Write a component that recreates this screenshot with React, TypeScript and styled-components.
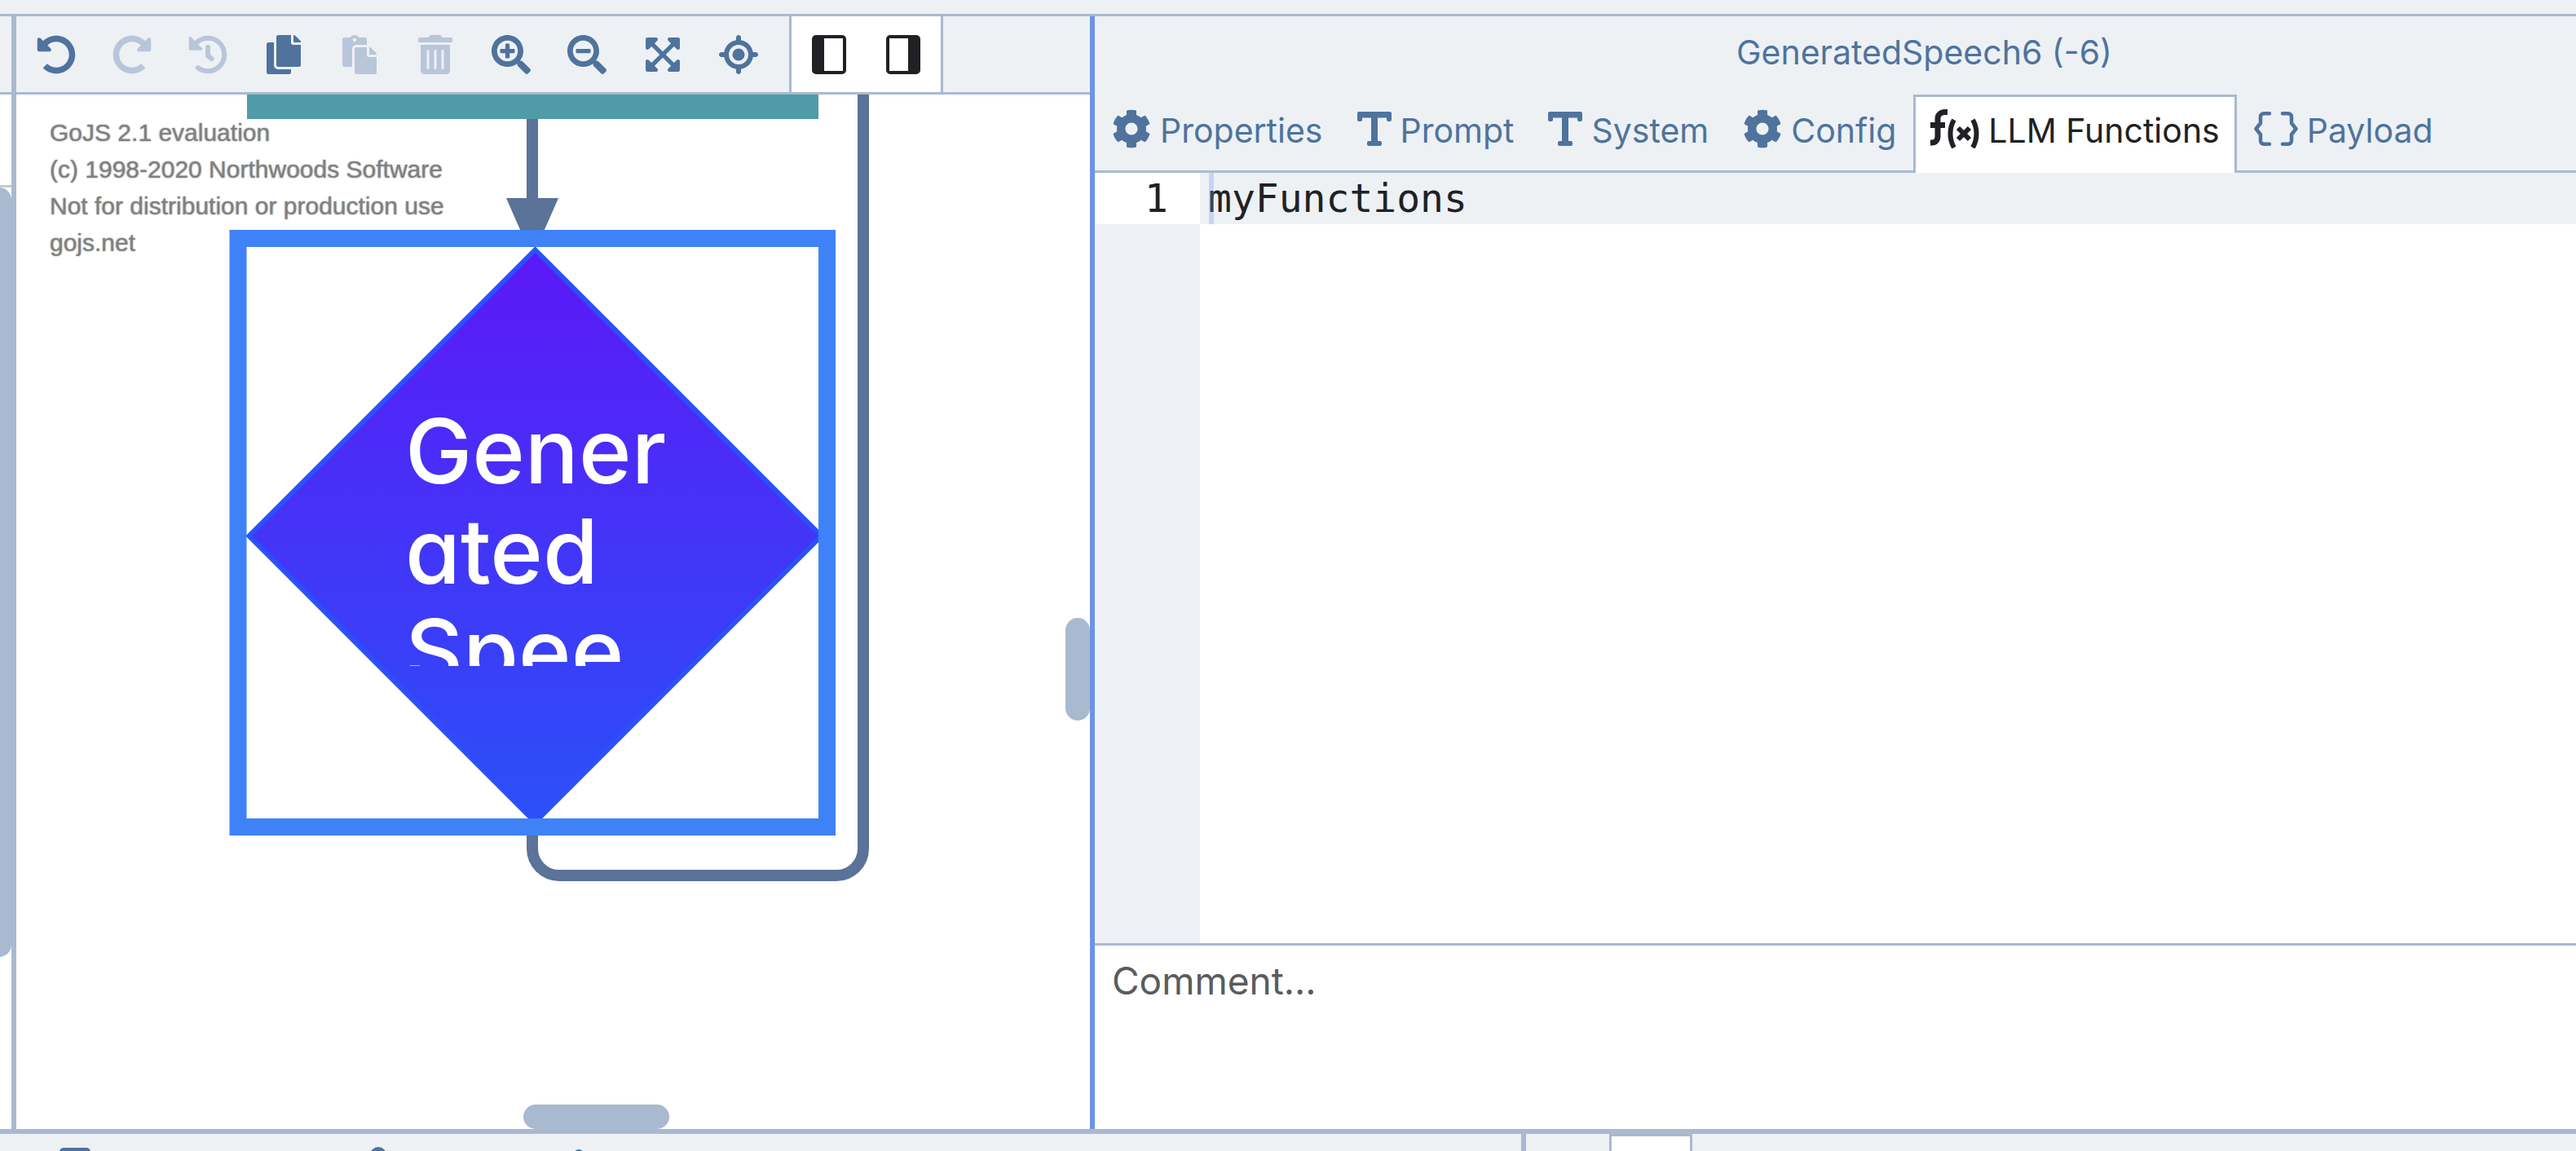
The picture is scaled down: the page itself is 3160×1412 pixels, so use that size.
import React from "react";
import styled, { createGlobalStyle } from "styled-components";
import {
  FaUndoAlt, FaRedoAlt, FaHistory, FaCopy, FaPaste, FaTrashAlt,
  FaSearchPlus, FaSearchMinus, FaExpandArrowsAlt, FaCog,
} from "react-icons/fa";
import { FaLocationCrosshairs } from "react-icons/fa6";

const c = {
  line: "#a9b9d0",
  chrome: "#edf1f4",
  ink: "#4f739d",
  faded: "#b9c5d9",
  dark: "#202124",
  focus: "#6d93e5",
  link: "#5b7299",
};

const Global = createGlobalStyle`
  *, *::before, *::after { box-sizing: border-box; }
  html, body, #root { height: 100%; }
  body { margin: 0; overflow: hidden; background: #fff; font-family: Inter, "Liberation Sans", sans-serif; }
  button, textarea { font: inherit; color: inherit; border: 0; margin: 0; background: none; border-radius: 0; }
`;

const Page = styled.div`
  display: flex;
  flex-direction: column;
  height: 100vh;
`;

const TopStrip = styled.header`
  flex: none;
  height: 20px;
  background: ${c.chrome};
  border-bottom: 3px solid ${c.line};
`;

const Workspace = styled.main`
  flex: 1;
  min-height: 0;
  display: flex;
`;

const SidePane = styled.aside`
  flex: none;
  width: 20px;
  display: flex;
  flex-direction: column;
  border-right: 6px solid ${c.line};
`;

const SideHead = styled.div`
  height: 96px;
  flex: none;
  background: ${c.chrome};
  border-bottom: 3px solid ${c.line};
`;

const SideBody = styled.div`
  flex: 1;
  position: relative;
  overflow: hidden;
  padding-top: 111px;
`;

const SideRule = styled.div`
  height: 3px;
  background: #c5cbd3;
`;

const DiagramPane = styled.section`
  flex: 1317;
  min-width: 0;
  display: flex;
  flex-direction: column;
`;

const Toolbar = styled.div`
  flex: none;
  height: 96px;
  display: flex;
  align-items: stretch;
  padding-left: 2px;
  background: ${c.chrome};
  border-bottom: 3px solid ${c.line};
`;

const ToolButton = styled.button`
  width: 93px;
  padding: 0;
  display: flex;
  align-items: center;
  justify-content: center;
  font-size: 48px;
  color: ${c.ink};
  &:disabled { color: ${c.faded}; }
`;

const ToggleGroup = styled.div`
  display: flex;
  width: 189px;
  margin-left: 16px;
  background: #fff;
  border: solid ${c.line};
  border-width: 0 3px;
`;

const ToggleButton = styled(ToolButton)`
  flex: 1;
  width: auto;
  color: ${c.dark};
`;

const Canvas = styled.div`
  flex: 1;
  min-height: 0;
  position: relative;
  overflow: hidden;
  background: #fff;
`;

const Drawing = styled.svg`
  position: absolute;
  left: 0;
  top: 0;
`;

const Watermark = styled.p`
  position: absolute;
  left: 41px;
  top: 24px;
  margin: 0;
  font: 30px/45px "Liberation Sans", Arial, sans-serif;
  color: #808080;
  text-shadow: 0 0 2px #808080;
  white-space: pre;
`;

const NodeLabel = styled.div`
  position: absolute;
  left: 477px;
  top: 376px;
  width: 360px;
  height: 325px;
  overflow: hidden;
  color: #fff;
  font-size: 110px;
  font-weight: 500;
  font-feature-settings: "cv11";
  line-height: 123px;
  white-space: pre;
`;

const Thumb = styled.div<{ $x: string; $y: string; $w: number; $h: number }>`
  position: absolute;
  left: ${(p) => p.$x};
  top: ${(p) => p.$y};
  width: ${(p) => p.$w}px;
  height: ${(p) => p.$h}px;
  border-radius: 15px;
  background: ${c.line};
`;

const Inspector = styled.section`
  flex: 1817;
  min-width: 0;
  display: flex;
  flex-direction: column;
  border-left: 6px solid ${c.focus};
`;

const Title = styled.h1`
  flex: none;
  height: 96px;
  margin: 0;
  padding: 0 0 8px 218px;
  display: flex;
  align-items: center;
  justify-content: center;
  background: ${c.chrome};
  color: ${c.ink};
  font-size: 41px;
  font-weight: 400;
`;

const Tabs = styled.div`
  flex: none;
  height: 96px;
  display: flex;
  background: linear-gradient(${c.line}, ${c.line}) bottom / 100% 3px no-repeat ${c.chrome};
`;

const Tab = styled.button<{ $active?: boolean }>`
  display: flex;
  align-items: center;
  gap: 11px;
  padding: 0 18px 12px;
  border: 3px solid transparent;
  border-bottom-width: 0;
  color: ${(p) => (p.$active ? c.dark : c.ink)};
  ${(p) => p.$active && `background: #fff; border-color: ${c.line};`}
  font-size: 41px;
  white-space: nowrap;
  svg { font-size: 48px; flex: none; margin-bottom: 4px; }
`;

const Editor = styled.div`
  flex: 1;
  min-height: 0;
  display: grid;
  grid-template-columns: 129px 1fr;
  font: 48px/63px "DejaVu Sans Mono", monospace;
  color: ${c.dark};
`;

const Gutter = styled.div`
  background: #eef1f6;
`;

const LineNumber = styled.div`
  height: 63px;
  padding-right: 39px;
  text-align: right;
  background: #fff;
`;

const CodeLine = styled.div`
  position: relative;
  height: 63px;
  padding-left: 10px;
  background: ${c.chrome};
`;

const Caret = styled.span`
  position: absolute;
  left: 11px;
  top: 0;
  width: 6px;
  height: 63px;
  background: #6d93ff4d;
`;

const Comment = styled.textarea`
  flex: none;
  display: block;
  width: 100%;
  height: 228px;
  padding: 12px 21px;
  border-top: 3px solid ${c.line};
  resize: none;
  outline: none;
  overflow: hidden;
  font-size: 46px;
  line-height: 62px;
  background: #fff;
  &::placeholder { color: #5a5c5e; opacity: 1; }
`;

const Dock = styled.footer`
  flex: none;
  height: 27px;
  display: flex;
  border-top: 6px solid ${c.line};
  background: ${c.chrome};
`;

const DockLeft = styled.div`
  flex: 1866;
  min-width: 0;
  overflow: hidden;
`;

const DockRight = styled.div`
  flex: 1288;
  min-width: 0;
  display: flex;
  border-left: 6px solid ${c.line};
`;

const DockTab = styled.div`
  width: 102px;
  height: 21px;
  margin-left: 102px;
  background: #fff;
  border: 3px solid ${c.line};
  border-bottom: 0;
`;

const PanelIcon = ({ right }: { right?: boolean }) => (
  <svg width="42" height="48" viewBox="0 0 42 48" fill="currentColor">
    <path fillRule="evenodd" d={right
      ? "M5 0h32a5 5 0 0 1 5 5v38a5 5 0 0 1-5 5H5a5 5 0 0 1-5-5V5a5 5 0 0 1 5-5ZM4 4v40h23V4Z"
      : "M5 0h32a5 5 0 0 1 5 5v38a5 5 0 0 1-5 5H5a5 5 0 0 1-5-5V5a5 5 0 0 1 5-5ZM15 4v40h23V4Z"} />
  </svg>
);

const TypeIcon = () => (
  <svg width="42" height="48" viewBox="0 0 42 48" fill="currentColor">
    <path d="M2 3h38a2 2 0 0 1 2 2v8a2 2 0 0 1-2 2h-2a2 2 0 0 1-2-2v-2.500H25V39h3a2 2 0 0 1 2 2v2a2 2 0 0 1-2 2H14a2 2 0 0 1-2-2v-2a2 2 0 0 1 2-2h3V10.500H6V13a2 2 0 0 1-2 2H2a2 2 0 0 1-2-2V5a2 2 0 0 1 2-2Z" />
  </svg>
);

const FunctionIcon = () => (
  <svg width="60" height="48" viewBox="0 0 60 48" fill="none" stroke="currentColor">
    <path d="M21 3.500h-3c-5 0-9 3-9 8V33c0 5-3 8-7 8H0M0 19.500h18" strokeWidth="7" />
    <path d="M29 13c-6 10-6 24 0 34M52 13c6 10 6 24 0 34" strokeWidth="6" />
    <path d="M34 23l14 14M48 23L34 37" strokeWidth="6" />
  </svg>
);

const BracesIcon = () => (
  <svg width="54" height="48" viewBox="0 0 54 48" fill="none" stroke="currentColor" strokeWidth="4.500" strokeLinejoin="round" strokeLinecap="round">
    <path d="M19 5.200h-7a4 4 0 0 0-4 4V17l-5.500 7L8 31v7.800a4 4 0 0 0 4 4h7M35 5.200h7a4 4 0 0 1 4 4V17l5.500 7L46 31v7.800a4 4 0 0 1-4 4h-7" />
  </svg>
);

const tools = [
  { name: "Undo", Icon: FaUndoAlt },
  { name: "Redo", Icon: FaRedoAlt, off: true },
  { name: "History", Icon: FaHistory, off: true },
  { name: "Copy", Icon: FaCopy },
  { name: "Paste", Icon: FaPaste, off: true },
  { name: "Delete", Icon: FaTrashAlt, off: true },
  { name: "Zoom in", Icon: FaSearchPlus },
  { name: "Zoom out", Icon: FaSearchMinus },
  { name: "Fit", Icon: FaExpandArrowsAlt },
  { name: "Locate", Icon: FaLocationCrosshairs },
];

const tabs = [
  { label: "Properties", Icon: FaCog },
  { label: "Prompt", Icon: TypeIcon },
  { label: "System", Icon: TypeIcon },
  { label: "Config", Icon: FaCog },
  { label: "LLM Functions", Icon: FunctionIcon, active: true },
  { label: "Payload", Icon: BracesIcon },
];

export default function App() {
  return (
    <Page>
      <Global />
      <TopStrip />
      <Workspace>
        <SidePane>
          <SideHead />
          <SideBody>
            <SideRule />
            <Thumb $x="-16px" $y="114px" $w={30} $h={944} />
          </SideBody>
        </SidePane>
        <DiagramPane>
          <Toolbar role="toolbar">
            {tools.map(({ name, Icon, off }) => (
              <ToolButton key={name} aria-label={name} disabled={off}><Icon /></ToolButton>
            ))}
            <ToggleGroup>
              <ToggleButton aria-label="Left panel" aria-pressed="true"><PanelIcon /></ToggleButton>
              <ToggleButton aria-label="Right panel" aria-pressed="true"><PanelIcon right /></ToggleButton>
            </ToggleGroup>
          </Toolbar>
          <Canvas>
            <Drawing width="1317" height="1269" viewBox="20 116 1317 1269">
              <defs>
                <linearGradient id="node" x1="0" y1="0" x2="0" y2="1">
                  <stop offset="0" stopColor="#5c18f7" />
                  <stop offset="1" stopColor="#2b50f8" />
                </linearGradient>
              </defs>
              <path d="M303 100h701v46H303Z" fill="#4f9ca8" />
              <path d="M653 146v100M653 1020v21a33 33 0 0 0 33 33h340a33 33 0 0 0 33-33V100" fill="none" stroke={c.link} strokeWidth="14" />
              <path d="M621 243h64l-25 57h-14Z" fill={c.link} />
              <path d="M656.500 306.500L1007.500 657.500L656.500 1008.500L305.500 657.500Z" fill="url(#node)" stroke="#2b50f8" strokeWidth="6" />
              <rect x="292" y="292.500" width="722.500" height="722" fill="none" stroke="#3f82f7" strokeWidth="21" />
            </Drawing>
            <NodeLabel>{"Gener\nated\nSpee"}</NodeLabel>
            <Watermark>{"GoJS 2.1 evaluation\n(c) 1998-2020 Northwoods Software\nNot for distribution or production use\ngojs.net"}</Watermark>
            <Thumb $x="calc(100% - 30px)" $y="642px" $w={30} $h={126} />
            <Thumb $x="622px" $y="calc(100% - 30px)" $w={179} $h={30} />
          </Canvas>
        </DiagramPane>
        <Inspector>
          <Title>GeneratedSpeech6 (-6)</Title>
          <Tabs role="tablist">
            {tabs.map(({ label, Icon, active }) => (
              <Tab key={label} role="tab" aria-selected={!!active} $active={active}><Icon />{label}</Tab>
            ))}
          </Tabs>
          <Editor>
            <Gutter><LineNumber>1</LineNumber></Gutter>
            <div><CodeLine>myFunctions<Caret /></CodeLine></div>
          </Editor>
          <Comment aria-label="Comment" placeholder="Comment..." />
        </Inspector>
      </Workspace>
      <Dock>
        <DockLeft>
          <svg width="760" height="21" viewBox="0 1391 760 21" fill={c.ink}>
            <rect x="73" y="1408" width="38" height="20" rx="5" />
            <circle cx="464" cy="1417" r="10" />
            <circle cx="710" cy="1416" r="6" />
          </svg>
        </DockLeft>
        <DockRight><DockTab /></DockRight>
      </Dock>
    </Page>
  );
}
